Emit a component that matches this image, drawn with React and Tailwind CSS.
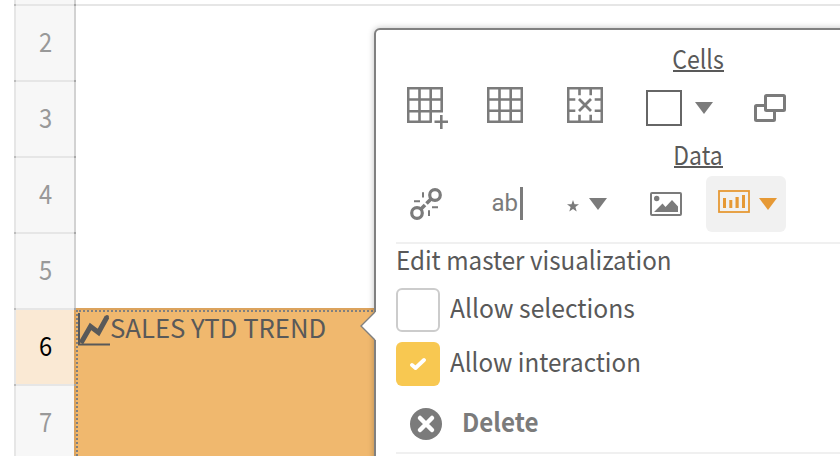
import React from "react";

const rows = [
  { n: 2 }, { n: 3 }, { n: 4 }, { n: 5 }, { n: 6, active: true }, { n: 7 },
];

function RowHeader({ n, active }) {
  return (
    <div
      className={
        "relative flex h-[76px] shrink-0 items-center justify-center border-t-2 border-[#e6e6e6] pb-[5px] text-[27px] leading-none " +
        (active ? "bg-[#fae9d4] text-black" : "bg-[#f7f7f7] text-[#999999]")
      }
    >
      <span className="inline-block scale-x-[0.88]">{n}</span>
      <i className="absolute -top-[2px] -left-[2px] h-[2px] w-[2px] bg-[#bdbdbd]" />
      <i className="absolute -top-[2px] -right-[2px] h-[2px] w-[2px] bg-[#a8a8a8]" />
    </div>
  );
}

function Tool({ children, className = "" }) {
  return <div className={"flex h-14 w-20 shrink-0 items-center justify-center rounded-[6px] " + className}>{children}</div>;
}

function Caret({ className = "fill-[#7b7b7b]" }) {
  return (
    <svg width="18" height="12" viewBox="0 0 18 12" className={className}>
      <path d="M0 0H18L9 12Z" />
    </svg>
  );
}

function AddGrid() {
  return (
    <svg width="42" height="42" viewBox="0 0 42 42" fill="none" stroke="#7b7b7b" strokeWidth="2.6">
      <path d="M24.2 34.7H1.2V1.2H34.7V24.2H1.2M23.7 35.7V1.2M1.2 12.5H34.7M12.5 1.2V34.7" />
      <path d="M27.5 34.7H41M34.3 28V42" />
    </svg>
  );
}

function Grid() {
  return (
    <svg width="36" height="36" viewBox="0 0 36 36" fill="none" stroke="#7b7b7b" strokeWidth="2.6">
      <path d="M1.2 1.2H34.8V34.8H1.2ZM1.2 12.5H34.8M1.2 23.7H34.8M12.5 1.2V34.8M23.7 1.2V34.8" />
    </svg>
  );
}

function ClearGrid() {
  return (
    <svg width="36" height="36" viewBox="0 0 36 36" fill="none" stroke="#7b7b7b" strokeWidth="2.6">
      <path d="M1.2 1.2H34.8V34.8H1.2Z" />
      <path d="M12.5 1.2V8.3M23.7 1.2V8.3M12.5 27.7V34.8M23.7 27.7V34.8M1.2 12.5H8.3M1.2 23.7H8.3M27.7 12.5H34.8M27.7 23.7H34.8" />
      <path d="M12 12L24 24M24 12L12 24" strokeWidth="2.8" />
    </svg>
  );
}

function Overlap() {
  return (
    <svg width="32" height="28" viewBox="0 0 32 28" fill="none" stroke="#7b7b7b" strokeWidth="3">
      <rect x="1.5" y="11.5" width="19" height="15" rx="1" />
      <rect x="11.5" y="1.5" width="19" height="15" rx="1" fill="white" />
    </svg>
  );
}

function Unlink() {
  return (
    <svg width="32" height="32" viewBox="0 0 32 32" fill="none" stroke="#7b7b7b" strokeWidth="3.2">
      <circle cx="25" cy="7" r="5.3" />
      <circle cx="7" cy="25" r="5.3" />
      <path d="M21 11L16.5 15.5M11 21L15 17" strokeWidth="3.6" />
      <path d="M13 4.200V9.5M4 13.200H10M22 19.200H28M19 22.200V28" strokeWidth="2" />
    </svg>
  );
}

function TextCursor() {
  return (
    <div className="flex items-center">
      <span className="inline-block w-[28px] font-['Roboto',sans-serif] text-[24px] leading-[32px] text-[#7b7b7b]">ab</span>
      <i className="h-[33px] w-[3px] bg-[#7b7b7b]" />
    </div>
  );
}

function Picture() {
  return (
    <svg width="32" height="24" viewBox="0 0 32 24" fill="#7b7b7b">
      <rect x="1" y="1" width="30" height="22" rx="1" fill="none" stroke="#7b7b7b" strokeWidth="2" />
      <circle cx="6.700" cy="6.500" r="2.700" />
      <path d="M4 20L12.500 11.500L15.500 15L22 8L28 14.500V20Z" />
    </svg>
  );
}

function BarsBox() {
  return (
    <svg width="32" height="24" viewBox="0 0 32 24" fill="#e69935">
      <rect x="1" y="1" width="30" height="21" fill="none" stroke="#e69935" strokeWidth="1.8" />
      <path d="M5 8H8V18H5ZM11.300 10H14.300V18H11.300ZM17.500 7H20.700V18H17.500ZM24 5H27V18H24Z" />
    </svg>
  );
}

function TrendIcon() {
  return (
    <svg width="34" height="34" viewBox="0 0 34 34" fill="none" stroke="#595959" className="shrink-0">
      <path d="M1 1V32.500H32" strokeWidth="2" />
      <path d="M3 31L12.500 14.500L20.500 20.500L29 5" strokeWidth="5" />
      <circle cx="29" cy="5" r="2" fill="#595959" stroke="none" />
    </svg>
  );
}

function SectionTitle({ children, width, scale }) {
  return (
    <div className="flex h-10 items-center justify-center pb-[2px]">
      <div className={"flex justify-center border-b-2 border-[#595959] text-[26px] leading-[24px] " + width}>
        <span className={"inline-block " + scale}>{children}</span>
      </div>
    </div>
  );
}

export default function App() {
  return (
    <div className="relative flex h-[456px] w-[840px] overflow-hidden bg-white pl-[14px] font-['Noto_Sans_CJK_SC','Noto_Sans',sans-serif] text-[#595959]">
      <div className="flex w-[62px] shrink-0 flex-col border-r-2 border-l-2 border-r-[#d2d2d2] border-l-[#e6e6e6] bg-[#f7f7f7] pt-1">
        {rows.map((r) => <RowHeader key={r.n} {...r} />)}
      </div>
      <div className="flex grow flex-col pt-1">
        <div className="h-[304px] shrink-0 border-t-2 border-[#e6e6e6]" />
        <div className="-ml-[2px] h-[160px] shrink-0 border-t-2 border-l-2 border-[#dca35d] bg-[#f0b86e]">
          <div className="flex h-full items-start border-t-2 border-l-2 border-dotted border-[#808080]">
            <TrendIcon />
            <span className="-ml-[2px] inline-block origin-left scale-x-[0.988] pt-[1px] text-[26px] leading-[28px] whitespace-nowrap">SALES YTD TREND</span>
          </div>
        </div>
      </div>

      <div className="absolute top-[28px] left-[374px] flex h-[480px] w-[648px] flex-col rounded-[6px] border-2 border-[#808080] bg-white pt-[10px] shadow-[0_0_6px_rgba(0,0,0,0.25)]">
        <svg width="17" height="30" viewBox="0 0 17 30" className="absolute top-[281px] -left-[17px]">
          <path d="M17 1H16L2 15L16 29H17Z" fill="white" />
          <path d="M16 1L2 15L16 29" fill="none" stroke="#808080" strokeWidth="1.400" />
        </svg>
        <SectionTitle width="w-[51px]" scale="scale-x-[0.89]">Cells</SectionTitle>
        <div className="flex pl-[10px]">
          <Tool className="pl-[4px]"><AddGrid /></Tool>
          <Tool className="pr-[2px] pb-[6px]"><Grid /></Tool>
          <Tool className="pr-[2px] pb-[6px]"><ClearGrid /></Tool>
          <div className="flex h-14 w-[104px] items-center gap-[13px] pl-5">
            <i className="h-9 w-9 border-2 border-[#666666]" />
            <Caret />
          </div>
          <Tool><Overlap /></Tool>
        </div>
        <SectionTitle width="w-[49px]" scale="scale-x-[0.88]">Data</SectionTitle>
        <div className="flex pl-[10px]">
          <Tool><Unlink /></Tool>
          <Tool className="pb-[2px] pl-[2px]"><TextCursor /></Tool>
          <Tool className="gap-[10px] pl-[2px]">
            <svg width="12" height="12" viewBox="0 0 12 12" className="mt-[4px] fill-[#7b7b7b]">
              <path d="M6 0L7.500 4.200H12L8.400 7L9.700 11.500L6 8.900L2.300 11.500L3.600 7L0 4.200H4.500Z" />
            </svg>
            <Caret />
          </Tool>
          <Tool><Picture /></Tool>
          <Tool className="gap-[9px] bg-[#f1f1f1] pl-[3px]">
            <span className="-mt-[5px]"><BarsBox /></span>
            <Caret className="fill-[#e69935]" />
          </Tool>
        </div>
        <div className="mx-5 mt-[10px] border-t-2 border-b-2 border-[#f0f0f0]">
          <div className="h-11 text-[26px] leading-[30px] whitespace-nowrap">
            <span className="inline-block origin-left scale-x-[0.93]">Edit master visualization</span>
          </div>
          <label className="flex h-11 items-center gap-[10px] text-[26px] leading-[30px]">
            <i className="h-11 w-11 rounded-[6px] border-2 border-[#cccccc] bg-white" />
            <span className="-mt-[6px] inline-block origin-left scale-x-[0.948]">Allow selections</span>
          </label>
          <label className="mt-[10px] flex h-11 items-center gap-[10px] text-[26px] leading-[30px]">
            <i className="flex h-11 w-11 items-center justify-center rounded-[6px] bg-[#f8c851]">
              <svg width="16" height="14" viewBox="0 0 16 14" fill="none" stroke="white" strokeWidth="3.800" strokeLinecap="round" strokeLinejoin="round">
                <path d="M2 8L5.500 11L14 3" />
              </svg>
            </i>
            <span className="-mt-[6px] inline-block origin-left scale-x-[0.93]">Allow interaction</span>
          </label>
          <div className="mt-[10px] flex h-14 items-center gap-5 pl-[14px] text-[26px] leading-[30px] font-bold text-[#7b7b7b]">
            <svg width="32" height="32" viewBox="0 0 32 32">
              <circle cx="16" cy="16" r="16" fill="#7b7b7b" />
              <path d="M10 10L22 22M22 10L10 22" stroke="white" strokeWidth="4.500" strokeLinecap="round" />
            </svg>
            <span className="-mt-[6px] inline-block origin-left scale-x-[0.93]">Delete</span>
          </div>
        </div>
      </div>
    </div>
  );
}
